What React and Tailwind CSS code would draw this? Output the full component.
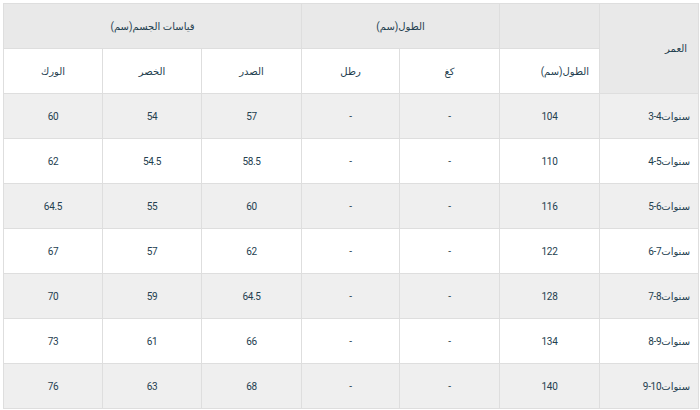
import React from 'react';

const rows = [
  { age: '3-4', height: '104', kg: '-', lb: '-', chest: '57', waist: '54', hip: '60' },
  { age: '4-5', height: '110', kg: '-', lb: '-', chest: '58.5', waist: '54.5', hip: '62' },
  { age: '5-6', height: '116', kg: '-', lb: '-', chest: '60', waist: '55', hip: '64.5' },
  { age: '6-7', height: '122', kg: '-', lb: '-', chest: '62', waist: '57', hip: '67' },
  { age: '7-8', height: '128', kg: '-', lb: '-', chest: '64.5', waist: '59', hip: '70' },
  { age: '8-9', height: '134', kg: '-', lb: '-', chest: '66', waist: '61', hip: '73' },
  { age: '9-10', height: '140', kg: '-', lb: '-', chest: '68', waist: '63', hip: '76' },
];

const cell = 'border border-[#dedede] h-[45px] text-center font-normal';

export default function App() {
  return (
    <div className="w-[700px] h-[410px] bg-white pt-[3px] pl-[3px]">
      <table
        dir="rtl"
        className="w-[695px] table-fixed border-collapse text-[10px] tracking-[-0.3px] text-[#24404f]"
        style={{ fontFamily: 'Roboto, "DejaVu Sans", sans-serif' }}
      >
        <colgroup>
          <col className="w-[99px]" />
          <col className="w-[100px]" />
          <col className="w-[100px]" />
          <col className="w-[98px]" />
          <col className="w-[100px]" />
          <col className="w-[99px]" />
          <col className="w-[99px]" />
        </colgroup>
        <thead>
          <tr className="bg-[#e9e9e9]">
            <th rowSpan={2} className={`${cell} text-right pr-[11px]`}>العمر</th>
            <th className={cell}></th>
            <th colSpan={2} className={cell}>الطول(سم)</th>
            <th colSpan={3} className={cell}>قياسات الجسم(سم)</th>
          </tr>
          <tr className="bg-white">
            <th className={`${cell} text-right pr-[10px]`}>الطول(سم)</th>
            <th className={cell}>كغ</th>
            <th className={cell}>رطل</th>
            <th className={cell}>الصدر</th>
            <th className={cell}>الخصر</th>
            <th className={cell}>الورك</th>
          </tr>
        </thead>
        <tbody>
          {rows.map((r, i) => (
            <tr key={r.age} className={i % 2 === 0 ? 'bg-[#efefef]' : 'bg-white'}>
              <td className={`${cell} pr-[8px]`}>
                <div dir="ltr" className="flex justify-end items-center">
                  <span>{r.age}</span>
                  <span>سنوات</span>
                </div>
              </td>
              <td className={cell}>{r.height}</td>
              <td className={cell}>{r.kg}</td>
              <td className={cell}>{r.lb}</td>
              <td className={cell}>{r.chest}</td>
              <td className={cell}>{r.waist}</td>
              <td className={cell}>{r.hip}</td>
            </tr>
          ))}
        </tbody>
      </table>
    </div>
  );
}
